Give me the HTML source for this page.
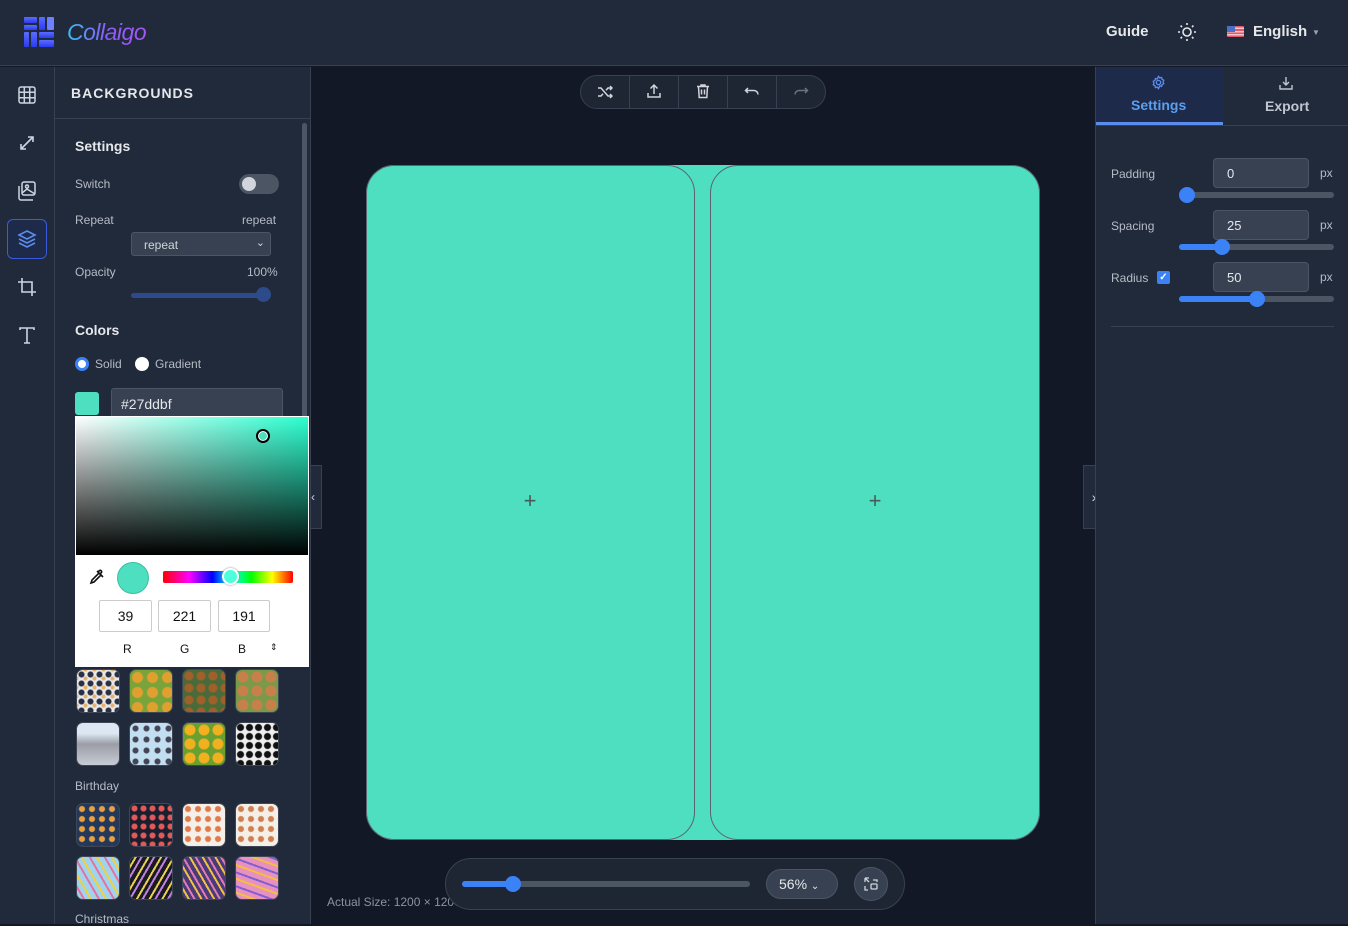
<!DOCTYPE html>
<html><head><meta charset="utf-8">
<style>
*{box-sizing:border-box;margin:0;padding:0}
body{width:1348px;height:924px;overflow:hidden;background:#131826;font-family:"Liberation Sans",sans-serif;position:relative;color:#d1d5db}
.abs{position:absolute}
.hdr{left:0;top:0;width:1348px;height:66px;background:#212a3a;border-bottom:1px solid #374151}
.rail{left:0;top:67px;width:55px;height:857px;background:#212a3a;border-right:1px solid #374151}
.panel{left:55px;top:67px;width:256px;height:857px;background:#212a3a;border-right:1px solid #374151}
.rp{left:1095px;top:67px;width:253px;height:857px;background:#212a3a;border-left:1px solid #374151}
.lbl{font-size:13px;color:#b6bcc6}
.thumb{position:absolute;width:44px;height:44px;border-radius:7px;border:1px solid #3f4756}
svg{display:block}
</style></head><body>
<div class="abs hdr"></div>
<svg class="abs" style="left:23px;top:16px" width="32" height="32" viewBox="0 0 32 32">
<defs><linearGradient id="lg" x1="0" y1="0" x2="0" y2="1"><stop offset="0" stop-color="#5b6cff"/><stop offset="1" stop-color="#2b3bf0"/></linearGradient></defs>
<rect x="1" y="1" width="13" height="6" rx="1" fill="url(#lg)"/><rect x="1" y="9" width="13" height="5" rx="1" fill="url(#lg)"/>
<rect x="1" y="16" width="5" height="15" rx="1" fill="url(#lg)"/><rect x="8" y="16" width="6" height="15" rx="1" fill="url(#lg)"/>
<rect x="16" y="1" width="6" height="13" rx="1" fill="url(#lg)"/><rect x="24" y="1" width="7" height="13" rx="1" fill="#6d80ff"/>
<rect x="16" y="16" width="15" height="6" rx="1" fill="url(#lg)"/><rect x="16" y="24" width="15" height="7" rx="1" fill="url(#lg)"/>
</svg>
<div class="abs" style="left:67px;top:19px;font-size:23px;font-style:italic;background:linear-gradient(90deg,#38bdf8,#8b5cf6,#a855f7);-webkit-background-clip:text;color:transparent;letter-spacing:-0.5px">Collaigo</div>
<div class="abs" style="left:1106px;top:23px;font-size:15px;font-weight:bold;color:#e5e7eb">Guide</div>
<svg class="abs" style="left:1177px;top:22px" width="20" height="20" viewBox="0 0 20 20" stroke="#e5e7eb" stroke-width="1.6" fill="none"><circle cx="10" cy="10" r="4"/><path d="M10 1v2M10 17v2M1 10h2M17 10h2M3.6 3.6l1.4 1.4M15 15l1.4 1.4M3.6 16.4l1.4-1.4M15 5l1.4-1.4"/></svg>
<div class="abs" style="left:1227px;top:26px;width:17px;height:11px;background:repeating-linear-gradient(#e05a6a 0 1.6px,#f3c4c8 1.6px 3.2px);border-radius:1px"><div style="width:8px;height:6px;background:#4a6fc8"></div></div>
<div class="abs" style="left:1253px;top:23px;font-size:15px;font-weight:bold;color:#e5e7eb">English</div>
<div class="abs" style="left:1312px;top:28px;font-size:8px;color:#9ca3af">▼</div>

<div class="abs rail"></div>
<svg class="abs" style="left:17px;top:85px" width="20" height="20" viewBox="0 0 20 20" stroke="#cbd5e1" stroke-width="1.5" fill="none"><rect x="2" y="2" width="16" height="16" rx="2"/><path d="M7.3 2v16M12.7 2v16M2 7.3h16M2 12.7h16"/></svg>
<svg class="abs" style="left:17px;top:133px" width="20" height="20" viewBox="0 0 20 20" stroke="#cbd5e1" stroke-width="1.6" fill="none"><path d="M4 16L16 4M11 4h5v5M4 11v5h5"/></svg>
<svg class="abs" style="left:17px;top:180px" width="20" height="22" viewBox="0 0 20 22" stroke="#cbd5e1" stroke-width="1.5" fill="none"><rect x="5" y="2" width="13" height="13" rx="2"/><path d="M2 6v12a2 2 0 0 0 2 2h12"/><circle cx="10" cy="6.5" r="1.5"/><path d="M5 13l5-4 8 5"/></svg>
<div class="abs" style="left:7px;top:219px;width:40px;height:40px;border:1.5px solid #3b5bdb;border-radius:6px;background:#1e2a4a"></div>
<svg class="abs" style="left:17px;top:229px" width="20" height="20" viewBox="0 0 20 20" stroke="#5b8def" stroke-width="1.6" fill="none"><path d="M10 2l8 4-8 4-8-4z"/><path d="M2 10l8 4 8-4M2 14l8 4 8-4"/></svg>
<svg class="abs" style="left:17px;top:277px" width="20" height="20" viewBox="0 0 20 20" stroke="#cbd5e1" stroke-width="1.6" fill="none"><path d="M5 1v14h14M1 5h14v14"/></svg>
<svg class="abs" style="left:17px;top:325px" width="20" height="20" viewBox="0 0 20 20" stroke="#cbd5e1" stroke-width="1.6" fill="none"><path d="M3 5V3h14v2M10 3v15M7 18h6"/></svg>

<div class="abs panel"></div>
<div class="abs" style="left:55px;top:118px;width:256px;height:1px;background:#374151"></div>
<div class="abs" style="left:71px;top:85px;font-size:14px;font-weight:bold;letter-spacing:1px;color:#e5e7eb">BACKGROUNDS</div>
<div class="abs" style="left:302px;top:123px;width:5px;height:420px;background:#4b5563;border-radius:3px"></div>
<div class="abs" style="left:75px;top:138px;font-size:14px;font-weight:bold;color:#e5e7eb">Settings</div>
<div class="abs lbl" style="left:75px;top:177px;font-size:12px">Switch</div>
<div class="abs" style="left:239px;top:174px;width:40px;height:20px;border-radius:10px;background:#4b5563"><div style="margin:3px;width:14px;height:14px;border-radius:7px;background:#d1d5db"></div></div>
<div class="abs lbl" style="left:75px;top:213px;font-size:12px">Repeat</div>
<div class="abs lbl" style="left:242px;top:213px;font-size:12px">repeat</div>
<div class="abs" style="left:131px;top:232px;width:140px;height:24px;background:#374151;border:1px solid #4b5563;border-radius:3px;font-size:12px;color:#d1d5db;padding:5px 12px">repeat<span style="position:absolute;right:5px;top:3px;font-size:11px">⌄</span></div>
<div class="abs lbl" style="left:75px;top:265px;font-size:12px">Opacity</div>
<div class="abs lbl" style="left:247px;top:265px;font-size:12px">100%</div>
<div class="abs" style="left:131px;top:293px;width:140px;height:5px;border-radius:3px;background:#2d4a8a"></div>
<div class="abs" style="left:256px;top:287px;width:15px;height:15px;border-radius:8px;background:#2d4a8a"></div>
<div class="abs" style="left:75px;top:322px;font-size:14px;font-weight:bold;color:#e5e7eb">Colors</div>
<div class="abs" style="left:75px;top:357px;width:14px;height:14px;border-radius:7px;background:#fff;border:3px solid #3b82f6"></div>
<div class="abs lbl" style="left:95px;top:357px;font-size:12px">Solid</div>
<div class="abs" style="left:135px;top:357px;width:14px;height:14px;border-radius:7px;background:#fff"></div>
<div class="abs lbl" style="left:155px;top:357px;font-size:12px">Gradient</div>
<div class="abs" style="left:75px;top:392px;width:24px;height:23px;border-radius:3px;background:#4ddfbf"></div>
<div class="abs" style="left:111px;top:388px;width:172px;height:30px;background:#374151;border:1px solid #4b5563;border-radius:3px;font-size:14px;color:#e5e7eb;padding:7px 9px">#27ddbf</div>

<div class="abs" style="left:75px;top:416px;width:234px;height:251px;background:#fff"></div>
<div class="abs" style="left:76px;top:417px;width:232px;height:138px;background:linear-gradient(to bottom,transparent,#000),linear-gradient(to right,#fff,#2bffd0)"></div>
<div class="abs" style="left:256px;top:429px;width:14px;height:14px;border-radius:7px;border:2px solid #000;background:#4ddfbf;box-shadow:0 0 0 1px #fff inset"></div>
<svg class="abs" style="left:89px;top:569px" width="16" height="16" viewBox="0 0 16 16" stroke="#111" stroke-width="1.6" fill="none"><path d="M2 14l1-3 7-7 2 2-7 7zM9 3l1.5-1.5a1.5 1.5 0 0 1 2 2L11 5M8 2l6 6"/></svg>
<div class="abs" style="left:117px;top:562px;width:32px;height:32px;border-radius:16px;background:#4ddfbf;border:1px solid #3bbfa0"></div>
<div class="abs" style="left:163px;top:571px;width:130px;height:12px;border-radius:2px;background:linear-gradient(to right,#f00,#f0f 20%,#00f 38%,#0ff 52%,#0f0 68%,#ff0 84%,#f00)"></div>
<div class="abs" style="left:222px;top:568px;width:17px;height:17px;border-radius:9px;background:#4dffdb;border:2px solid #fff;box-shadow:0 0 2px #888"></div>
<div class="abs" style="left:99px;top:600px;width:53px;height:32px;border:1px solid #ccc;border-radius:2px;font-size:14px;color:#111;text-align:center;line-height:30px">39</div>
<div class="abs" style="left:158px;top:600px;width:53px;height:32px;border:1px solid #ccc;border-radius:2px;font-size:14px;color:#111;text-align:center;line-height:30px">221</div>
<div class="abs" style="left:218px;top:600px;width:52px;height:32px;border:1px solid #ccc;border-radius:2px;font-size:14px;color:#111;text-align:center;line-height:30px">191</div>
<div class="abs" style="left:123px;top:642px;font-size:12px;color:#111">R</div>
<div class="abs" style="left:180px;top:642px;font-size:12px;color:#111">G</div>
<div class="abs" style="left:238px;top:642px;font-size:12px;color:#111">B</div>
<div class="abs" style="left:270px;top:642px;font-size:9px;color:#111">⇕</div>

<div class="thumb" style="left:76px;top:669px;background:radial-gradient(circle,#2a3040 2.5px,transparent 3.5px) 0 0/9px 9px,radial-gradient(circle,#e8b060 1.5px,transparent 2.5px) 4px 4px/9px 9px,#e6e8ee"></div>
<div class="thumb" style="left:129px;top:669px;background:radial-gradient(circle,#e0a030 5px,transparent 6px) 0 0/15px 15px,#7aa43a"></div>
<div class="thumb" style="left:182px;top:669px;background:radial-gradient(circle,#a0602a 4px,transparent 5px) 0 0/12px 12px,#4a6a3a"></div>
<div class="thumb" style="left:235px;top:669px;background:radial-gradient(circle,#c8804a 5px,transparent 6px) 0 0/14px 14px,#7a9a4a"></div>
<div class="thumb" style="left:76px;top:722px;background:linear-gradient(#dbe7f2 25%,#9a9da6 50%,#c8ccd4)"></div>
<div class="thumb" style="left:129px;top:722px;background:radial-gradient(circle,#445 2.5px,transparent 3.5px) 0 0/11px 11px,#c2dff2"></div>
<div class="thumb" style="left:182px;top:722px;background:radial-gradient(circle,#f0b020 5px,transparent 6px) 0 0/14px 14px,#6aa030"></div>
<div class="thumb" style="left:235px;top:722px;background:radial-gradient(circle,#111 3px,transparent 4px) 0 0/9px 9px,#eee"></div>
<div class="abs lbl" style="left:75px;top:779px;font-size:12px">Birthday</div>
<div class="thumb" style="left:76px;top:803px;background:radial-gradient(circle,#e8a040 2.5px,transparent 3.5px) 0 0/10px 10px,#23385a"></div>
<div class="thumb" style="left:129px;top:803px;background:radial-gradient(circle,#e05a5a 2.5px,transparent 3.5px) 0 0/9px 9px,#1a1f30"></div>
<div class="thumb" style="left:182px;top:803px;background:radial-gradient(circle,#e07a4a 2.5px,transparent 3.5px) 0 0/10px 10px,#f4efe8"></div>
<div class="thumb" style="left:235px;top:803px;background:radial-gradient(circle,#d08050 2.5px,transparent 3.5px) 0 0/10px 10px,#f4efe8"></div>
<div class="thumb" style="left:76px;top:856px;background:repeating-linear-gradient(60deg,#a0d4ee 0 5px,#e870a0 5px 7px,#a0d4ee 7px 11px,#f0d040 11px 13px)"></div>
<div class="thumb" style="left:129px;top:856px;background:repeating-linear-gradient(120deg,#1a1a24 0 4px,#e8d050 4px 6px,#1a1a24 6px 9px,#c080e0 9px 11px)"></div>
<div class="thumb" style="left:182px;top:856px;background:repeating-linear-gradient(60deg,#4a3a7a 0 4px,#f0c040 4px 6px,#4a3a7a 6px 9px,#e07ab0 9px 11px)"></div>
<div class="thumb" style="left:235px;top:856px;background:repeating-linear-gradient(20deg,#e890c0 0 5px,#f0c040 5px 7px,#e890c0 7px 11px,#8060d0 11px 13px)"></div>
<div class="abs lbl" style="left:75px;top:912px;font-size:12px">Christmas</div>

<div class="abs" style="left:310px;top:465px;width:12px;height:64px;background:#212a3a;border:1px solid #374151;color:#cbd5e1;font-size:12px;line-height:62px;text-align:left">‹</div>
<div class="abs" style="left:580px;top:75px;width:246px;height:34px;border:1px solid #374151;border-radius:17px;background:#1e2533"></div>
<div class="abs" style="left:629px;top:76px;width:1px;height:33px;background:#374151"></div>
<div class="abs" style="left:678px;top:76px;width:1px;height:33px;background:#374151"></div>
<div class="abs" style="left:727px;top:76px;width:1px;height:33px;background:#374151"></div>
<div class="abs" style="left:776px;top:76px;width:1px;height:33px;background:#374151"></div>
<svg class="abs" style="left:597px;top:84px" width="16" height="16" viewBox="0 0 16 16" stroke="#d1d5db" stroke-width="1.5" fill="none"><path d="M1 4h3l7 8h4M1 12h3l2-2.3M9 6.3L11 4h4M13 2l2 2-2 2M13 10l2 2-2 2"/></svg>
<svg class="abs" style="left:646px;top:83px" width="16" height="16" viewBox="0 0 16 16" stroke="#d1d5db" stroke-width="1.5" fill="none"><path d="M8 11V2M4.5 5.5L8 2l3.5 3.5M2 10v4h12v-4"/></svg>
<svg class="abs" style="left:695px;top:83px" width="16" height="16" viewBox="0 0 16 16" stroke="#d1d5db" stroke-width="1.5" fill="none"><path d="M2 3.5h12M6 3.5V2h4v1.5M3.5 3.5l.7 11h7.6l.7-11M6.5 6.5v5M9.5 6.5v5"/></svg>
<svg class="abs" style="left:744px;top:84px" width="16" height="16" viewBox="0 0 16 16" stroke="#d1d5db" stroke-width="1.5" fill="none"><path d="M4 4L1.5 6.5 4 9M1.5 6.5H10a4 4 0 0 1 4 4"/></svg>
<svg class="abs" style="left:793px;top:84px" width="16" height="16" viewBox="0 0 16 16" stroke="#6b7280" stroke-width="1.5" fill="none"><path d="M12 4l2.5 2.5L12 9M14.5 6.5H6a4 4 0 0 0-4 4"/></svg>

<div class="abs" style="left:366px;top:165px;width:674px;height:675px;border-radius:28px;background:#4ddfbf"></div>
<div class="abs" style="left:366px;top:165px;width:329px;height:675px;border-radius:28px;border:1px solid #5b6270"></div>
<div class="abs" style="left:710px;top:165px;width:330px;height:675px;border-radius:28px;border:1px solid #5b6270"></div>
<div class="abs" style="left:521px;top:492px;width:18px;height:18px;color:#4a5a5a;font-size:22px;line-height:18px;text-align:center;font-weight:300">+</div>
<div class="abs" style="left:866px;top:492px;width:18px;height:18px;color:#4a5a5a;font-size:22px;line-height:18px;text-align:center;font-weight:300">+</div>

<div class="abs" style="left:1083px;top:465px;width:22px;height:64px;background:#212a3a;border:1px solid #374151;color:#cbd5e1;font-size:14px;line-height:62px;text-align:center">›</div>

<div class="abs" style="left:327px;top:895px;font-size:12px;color:#8b93a1">Actual Size: 1200 × 1200</div>
<div class="abs" style="left:445px;top:858px;width:460px;height:52px;border-radius:26px;border:1px solid #374151;background:#1f2633"></div>
<div class="abs" style="left:462px;top:881px;width:288px;height:6px;border-radius:3px;background:#4b5563"></div>
<div class="abs" style="left:462px;top:881px;width:52px;height:6px;border-radius:3px;background:#3b82f6"></div>
<div class="abs" style="left:505px;top:876px;width:16px;height:16px;border-radius:8px;background:#3b82f6"></div>
<div class="abs" style="left:766px;top:869px;width:72px;height:30px;border-radius:15px;background:#374151;border:1px solid #4b5563;font-size:14px;color:#e5e7eb;padding:6px 12px">56% <span style="font-size:10px">⌄</span></div>
<div class="abs" style="left:854px;top:867px;width:34px;height:34px;border-radius:17px;background:#374151;border:1px solid #4b5563"></div>
<svg class="abs" style="left:863px;top:876px" width="16" height="16" viewBox="0 0 16 16" stroke="#d1d5db" stroke-width="1.3" fill="none"><rect x="8" y="8" width="6" height="5" rx="1"/><path d="M2 2h4M2 2v4M2 2l4 4M10 4h4v2M2 10v4h3"/></svg>

<div class="abs rp"></div>
<div class="abs" style="left:1096px;top:67px;width:127px;height:57px;background:#1e2a4a"></div>
<div class="abs" style="left:1096px;top:122px;width:127px;height:3px;background:#5b8def"></div>
<div class="abs" style="left:1096px;top:125px;width:252px;height:1px;background:#374151"></div>
<svg class="abs" style="left:1151px;top:75px" width="15" height="15" viewBox="0 0 16 16" stroke="#5b8def" stroke-width="1.4" fill="none"><circle cx="8" cy="8" r="2.3"/><path d="M8 1.5l1.3 1.6 2-.5.5 2 1.8.9-.7 1.9.7 1.9-1.8.9-.5 2-2-.5L8 14.5l-1.3-1.6-2 .5-.5-2-1.8-.9.7-1.9-.7-1.9 1.8-.9.5-2 2 .5z"/></svg>
<div class="abs" style="left:1131px;top:97px;font-size:14px;font-weight:bold;color:#5b9ff0">Settings</div>
<svg class="abs" style="left:1278px;top:76px" width="16" height="15" viewBox="0 0 16 15" stroke="#c0c6d0" stroke-width="1.4" fill="none"><path d="M8 1v8M5 6l3 3 3-3M2 9v4h12V9"/></svg>
<div class="abs" style="left:1265px;top:98px;font-size:14px;font-weight:bold;color:#c0c6d0">Export</div>
<div class="abs lbl" style="left:1111px;top:167px;font-size:12px">Padding</div>
<div class="abs lbl" style="left:1111px;top:219px;font-size:12px">Spacing</div>
<div class="abs lbl" style="left:1111px;top:271px;font-size:12px">Radius</div>
<div class="abs" style="left:1157px;top:271px;width:13px;height:13px;border-radius:2px;background:#3b82f6;color:#fff;font-size:10px;line-height:13px;text-align:center;font-weight:bold">✓</div>
<div class="abs" style="left:1213px;top:158px;width:96px;height:30px;background:#374151;border:1px solid #4b5563;border-radius:4px;font-size:13px;color:#e5e7eb;padding:7px 13px">0</div>
<div class="abs" style="left:1213px;top:210px;width:96px;height:30px;background:#374151;border:1px solid #4b5563;border-radius:4px;font-size:13px;color:#e5e7eb;padding:7px 13px">25</div>
<div class="abs" style="left:1213px;top:262px;width:96px;height:30px;background:#374151;border:1px solid #4b5563;border-radius:4px;font-size:13px;color:#e5e7eb;padding:7px 13px">50</div>
<div class="abs lbl" style="left:1320px;top:166px;font-size:12px">px</div>
<div class="abs lbl" style="left:1320px;top:218px;font-size:12px">px</div>
<div class="abs lbl" style="left:1320px;top:270px;font-size:12px">px</div>
<div class="abs" style="left:1179px;top:192px;width:155px;height:6px;border-radius:3px;background:#4b5563"></div>
<div class="abs" style="left:1179px;top:187px;width:16px;height:16px;border-radius:8px;background:#3b82f6"></div>
<div class="abs" style="left:1179px;top:244px;width:155px;height:6px;border-radius:3px;background:#4b5563"></div>
<div class="abs" style="left:1179px;top:244px;width:43px;height:6px;border-radius:3px;background:#3b82f6"></div>
<div class="abs" style="left:1214px;top:239px;width:16px;height:16px;border-radius:8px;background:#3b82f6"></div>
<div class="abs" style="left:1179px;top:296px;width:155px;height:6px;border-radius:3px;background:#4b5563"></div>
<div class="abs" style="left:1179px;top:296px;width:78px;height:6px;border-radius:3px;background:#3b82f6"></div>
<div class="abs" style="left:1249px;top:291px;width:16px;height:16px;border-radius:8px;background:#3b82f6"></div>
<div class="abs" style="left:1111px;top:326px;width:223px;height:1px;background:#374151"></div>
</body></html>
